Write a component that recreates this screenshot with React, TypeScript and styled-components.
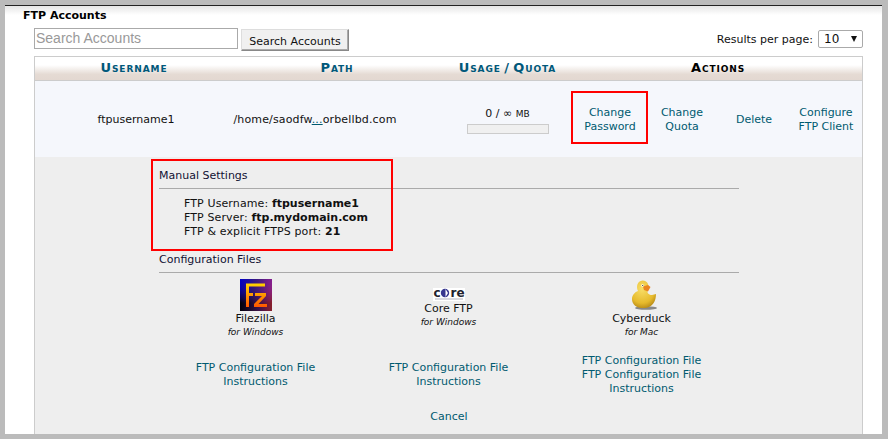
import React from "react";
import styled, { createGlobalStyle } from "styled-components";

const Global = createGlobalStyle`
  html, body { margin: 0; padding: 0; background: #bbbbbb; }
  body { font-family: "DejaVu Sans", Verdana, sans-serif; font-size: 11px; color: #111; }
`;

const Page = styled.div`
  position: relative;
  width: 888px;
  height: 439px;
  overflow: hidden;
  box-sizing: border-box;
  padding: 5px 6px 5px 5px;
`;

const Panel = styled.div`
  height: 429px;
  box-sizing: border-box;
  border-top: 1px solid #222;
  background: linear-gradient(#e6e6e6 0, #fff 9px);
  padding: 3px 18px 0 18px;
  overflow: hidden;
`;

const Title = styled.h2`
  margin: 0;
  font-size: 11px;
  line-height: 13px;
  font-weight: bold;
  color: #000;
`;

const Tools = styled.div`
  display: flex;
  align-items: flex-start;
  margin: 6px 0 0 11px;
  width: 829px;
  height: 28px;
`;

const SearchInput = styled.input`
  box-sizing: border-box;
  width: 204px;
  height: 21px;
  border: 1px solid #aaa;
  padding: 0 1px 2px;
  font: 14px "Liberation Sans", Arial, sans-serif;
  background: #fff;
  &::placeholder { color: #999; opacity: 1; }
`;

const SearchButton = styled.button`
  box-sizing: border-box;
  width: 108px;
  height: 22px;
  margin: 1px 0 0 3px;
  padding: 2px 0 0;
  font: 11px "DejaVu Sans", Verdana, sans-serif;
  color: #111;
  background: #f0f0f0;
  border: 1px solid;
  border-color: #ddd #888 #888 #ddd;
  box-shadow: inset -1px -1px 0 #aaa;
`;

const PerPage = styled.div`
  margin-left: auto;
  display: flex;
  align-items: center;
  gap: 5px;
  margin-top: 2px;
`;

const FakeSelect = styled.div`
  box-sizing: border-box;
  width: 45px;
  height: 18px;
  border: 1px solid #aaa;
  border-radius: 2px;
  background: #fff;
  display: flex;
  align-items: center;
  justify-content: space-between;
  padding: 0 5px;
  font-size: 12px;
`;

const Arrow = styled.span`
  width: 0;
  height: 0;
  border-left: 3px solid transparent;
  border-right: 3px solid transparent;
  border-top: 6px solid #111;
`;

const Table = styled.div`
  margin-left: 11px;
  width: 829px;
  box-sizing: border-box;
  border: 1px solid #ccc;
  border-bottom: none;
`;

const HeadRow = styled.div`
  display: grid;
  grid-template-columns: 198px 164px 177px 1fr;
  height: 24px;
  box-sizing: border-box;
  align-items: center;
  background: linear-gradient(#fff 0, #fff 35%, #e5dbd4 75%, #e3d8d1 95%);
  border-bottom: 1px solid #ccc;
`;

const HeadCell = styled.div<{ $dark?: boolean; $shift?: number }>`
  text-align: center;
  font-weight: bold;
  font-variant: small-caps;
  font-size: 13px;
  letter-spacing: 0.9px;
  word-spacing: -2px;
  line-height: 14px;
  padding-bottom: 1px;
  color: ${(p) => (p.$dark ? "#000" : "#00587a")};
  padding-left: ${(p) => p.$shift ?? 0}px;
`;

const DataRow = styled.div`
  display: grid;
  grid-template-columns: 198px 164px 177px repeat(4, 72px);
  height: 76px;
  box-sizing: border-box;
  padding-top: 2px;
  align-items: center;
  background: #f5f7fc;
`;

const Cell = styled.div<{ $shift?: number; $spread?: boolean }>`
  text-align: center;
  line-height: 14px;
  padding-left: ${(p) => p.$shift ?? 0}px;
  letter-spacing: ${(p) => (p.$spread ? "0.15px" : "normal")};
`;

const ActionLink = styled.a`
  color: #005a70;
  text-align: center;
  line-height: 14px;
  display: block;
`;

const Ellipsis = styled.span`
  color: #005a70;
  text-decoration: underline;
`;

const Small = styled.span`
  font-size: 9px;
`;

const Bar = styled.div`
  width: 82px;
  height: 10px;
  box-sizing: border-box;
  margin: 3px auto 0;
  border: 1px solid #ccc;
  background: #f0f0f0;
`;

const Details = styled.div`
  height: 277px;
  background: #eeeeee;
  padding: 12px 0 0 124px;
  box-sizing: border-box;
`;

const Inner = styled.div`
  width: 580px;
`;

const SectionTitle = styled.div`
  line-height: 14px;
  color: #113;
  padding-bottom: 5px;
  border-bottom: 1px solid #aaa;
`;

const Facts = styled.div`
  margin: 8px 0 14px 25px;
  line-height: 14px;
  letter-spacing: 0.12px;
  b { letter-spacing: 0; }
`;

const Columns = styled.div`
  display: grid;
  grid-template-columns: repeat(3, 193px);
`;

const Client = styled.div`
  text-align: center;
  line-height: 13px;
  padding-top: 6px;
  height: 68px;
  svg { display: block; margin: 0 auto; }
`;

const CoreLogo = styled.div`
  padding-top: 7px;
`;

const ClientName = styled.div`
  line-height: 14px;
  margin-top: 1px;
`;

const ClientOs = styled.div`
  font-size: 9px;
  font-style: italic;
  line-height: 13px;
`;

const LinkColumn = styled.div`
  height: 42px;
  display: flex;
  flex-direction: column;
  justify-content: center;
  align-items: center;
  margin-top: 7px;
`;

const CancelRow = styled.div`
  text-align: center;
  margin-top: 14px;
  line-height: 14px;
`;

const RedBox = styled.div`
  position: absolute;
  box-sizing: border-box;
  border: 2px solid #f00;
  pointer-events: none;
`;

const FilezillaIcon = () => (
  <svg width="32" height="32" viewBox="0 0 32 32">
    <defs>
      <linearGradient id="fzb" x1="0" y1="0" x2="1" y2="0.2">
        <stop offset="0" stopColor="#0000c8" />
        <stop offset="0.5" stopColor="#3a1a80" />
        <stop offset="1" stopColor="#8c2090" />
      </linearGradient>
      <linearGradient id="fzd" x1="0" y1="0" x2="1" y2="0">
        <stop offset="0" stopColor="#000" stopOpacity="0.95" />
        <stop offset="0.6" stopColor="#301030" stopOpacity="0.7" />
        <stop offset="1" stopColor="#8a2020" stopOpacity="0.9" />
      </linearGradient>
      <linearGradient id="fzf" x1="0" y1="0" x2="0" y2="1">
        <stop offset="0" stopColor="#ffd400" />
        <stop offset="1" stopColor="#ff5500" />
      </linearGradient>
      <linearGradient id="fzm" x1="0" y1="0" x2="0" y2="1">
        <stop offset="0" stopColor="#000" stopOpacity="0" />
        <stop offset="0.75" stopColor="#fff" stopOpacity="1" />
      </linearGradient>
      <mask id="fzk"><rect width="32" height="32" fill="url(#fzm)" /></mask>
    </defs>
    <rect width="32" height="32" fill="url(#fzb)" />
    <rect width="32" height="32" fill="url(#fzd)" mask="url(#fzk)" />
    <path
      d="M6 4.5H25V7.5H9V14H13V17H9V28H6Z M15 14H26V17L18.5 25H27V28H14V25L22 17H15Z"
      fill="url(#fzf)"
    />
  </svg>
);

const CoreIcon = () => (
  <svg width="32" height="15" viewBox="0 0 32 15">
    <rect y="2" width="32" height="13" fill="#fff" />
    <text x="0.5" y="11" fontFamily="'DejaVu Sans', sans-serif" fontSize="12" fontWeight="bold" fill="#22222e">c</text>
    <circle cx="12" cy="7" r="4.2" fill="#37378f" />
    <path d="M12.5 3 L15 7 L12.5 11 Z" fill="#fff" />
    <text x="17.5" y="11" fontFamily="'DejaVu Sans', sans-serif" fontSize="12" fontWeight="bold" fill="#22222e">re</text>
    <rect x="2" y="12.5" width="28" height="1" fill="#b4b4c0" />
  </svg>
);

const DuckIcon = () => (
  <svg width="32" height="32" viewBox="0 0 32 32">
    <defs>
      <radialGradient id="dk" cx="0.42" cy="0.3" r="0.8">
        <stop offset="0" stopColor="#f8de68" />
        <stop offset="0.65" stopColor="#e6ba2c" />
        <stop offset="1" stopColor="#a87a10" />
      </radialGradient>
    </defs>
    <ellipse cx="20" cy="29" rx="11" ry="1.8" fill="#666" opacity="0.75" />
    <path
      d="M6 20 C6 16 9 13 12 12 C10 8 11 2 16.5 1.5 C22 1.5 24 7 21.5 12 C21 14 23 16 26 16 L30 15 C30 22 27 28 19 29 C11 29.5 6 26 6 20 Z"
      fill="url(#dk)"
    />
    <path d="M17 7.5 L22 6 L24.5 8 L22 12.5 L18 11 Z" fill="#ea8420" />
    <circle cx="16.5" cy="6.5" r="1.2" fill="#fff" />
    <circle cx="16.7" cy="6.5" r="0.6" fill="#222" />
  </svg>
);

export default function App() {
  return (
    <Page>
      <Global />
      <Panel>
        <Title>FTP Accounts</Title>
        <Tools>
          <SearchInput placeholder="Search Accounts" />
          <SearchButton>Search Accounts</SearchButton>
          <PerPage>
            Results per page:
            <FakeSelect>
              10
              <Arrow />
            </FakeSelect>
          </PerPage>
        </Tools>
        <Table>
          <HeadRow>
            <HeadCell>Username</HeadCell>
            <HeadCell $shift={44}>Path</HeadCell>
            <HeadCell $shift={44}>Usage / Quota</HeadCell>
            <HeadCell $dark>Actions</HeadCell>
          </HeadRow>
          <DataRow>
            <Cell $shift={4}>ftpusername1</Cell>
            <Cell $spread>
              /home/saodfw<Ellipsis>...</Ellipsis>orbellbd.com
            </Cell>
            <Cell $shift={44}>
              0 / ∞ <Small>MB</Small>
              <Bar />
            </Cell>
            <ActionLink>
              Change
              <br />
              Password
            </ActionLink>
            <ActionLink>
              Change
              <br />
              Quota
            </ActionLink>
            <ActionLink>Delete</ActionLink>
            <ActionLink>
              Configure
              <br />
              FTP Client
            </ActionLink>
          </DataRow>
          <Details>
            <Inner>
              <SectionTitle>Manual Settings</SectionTitle>
              <Facts>
                FTP Username: <b>ftpusername1</b>
                <br />
                FTP Server: <b>ftp.mydomain.com</b>
                <br />
                FTP &amp; explicit FTPS port: <b>21</b>
              </Facts>
              <SectionTitle>Configuration Files</SectionTitle>
              <Columns>
                <Client>
                  <FilezillaIcon />
                  <ClientName>Filezilla</ClientName>
                  <ClientOs>for Windows</ClientOs>
                </Client>
                <Client>
                  <CoreLogo>
                    <CoreIcon />
                  </CoreLogo>
                  <ClientName>Core FTP</ClientName>
                  <ClientOs>for Windows</ClientOs>
                </Client>
                <Client>
                  <DuckIcon />
                  <ClientName>Cyberduck</ClientName>
                  <ClientOs>for Mac</ClientOs>
                </Client>
                <LinkColumn>
                  <ActionLink>
                    FTP Configuration File
                    <br />
                    Instructions
                  </ActionLink>
                </LinkColumn>
                <LinkColumn>
                  <ActionLink>
                    FTP Configuration File
                    <br />
                    Instructions
                  </ActionLink>
                </LinkColumn>
                <LinkColumn>
                  <ActionLink>
                    FTP Configuration File
                    <br />
                    FTP Configuration File
                    <br />
                    Instructions
                  </ActionLink>
                </LinkColumn>
              </Columns>
              <CancelRow>
                <ActionLink>Cancel</ActionLink>
              </CancelRow>
            </Inner>
          </Details>
        </Table>
      </Panel>
      <RedBox style={{ left: 571, top: 91, width: 77, height: 53 }} />
      <RedBox style={{ left: 151, top: 159, width: 242, height: 92 }} />
    </Page>
  );
}
